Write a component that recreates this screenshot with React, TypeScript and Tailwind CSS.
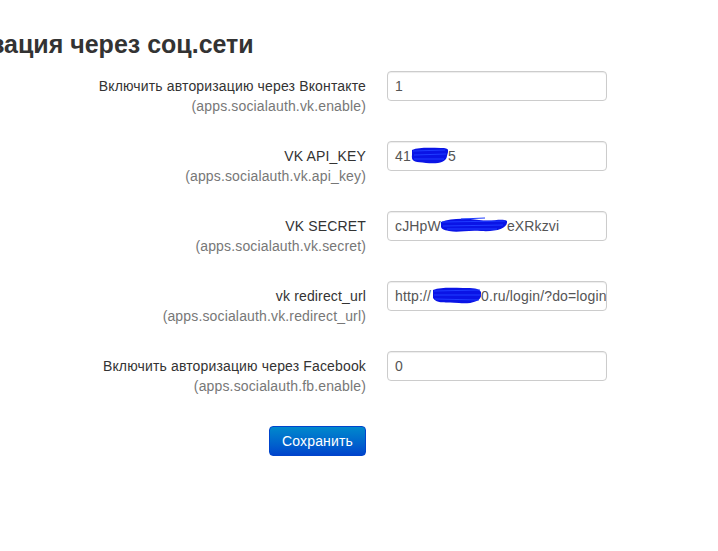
import React from 'react'

const font = { fontFamily: '"Liberation Sans", Arial, sans-serif' }

function Blob({ w, variant }: { w: number; variant: number }) {
  // blue pen scribble used to hide part of the value
  const paths = [
    'M1 3 C8 0, 20 1, 30 1 S37 4, 36 9 C35 16, 26 17, 15 16 S0 15, 1 8 Z',
    'M0 5 C10 1, 24 1, 38 3 S60 1, 66 4 C67 11, 56 15, 40 14 S18 16, 8 14 S0 10, 0 5 Z',
    'M2 3 C10 0, 22 1, 32 1 S48 1, 50 5 C52 14, 42 17, 28 16 S6 17, 2 11 Z',
  ]
  const lines = [
    'M2 4 L34 3 M3 8 L35 7 M3 12 L33 12',
    'M1 5 L64 4 M2 9 L62 8 M6 12 L56 12 M20 2 L44 1',
    'M3 4 L49 3 M3 8 L50 8 M4 12 L48 13',
  ]
  return (
    <svg width={w} height={17} viewBox={`0 0 ${w} 17`} className="shrink-0 -mt-[2px]">
      <path d={paths[variant]} fill="#0a14e6" />
      <path d={lines[variant]} stroke="#1f3cff" strokeWidth="1.2" fill="none" />
    </svg>
  )
}

function Field({ children }: { children: React.ReactNode }) {
  return (
    <div className="ml-[21px] w-[220px] h-[30px] border border-[#cccccc] rounded-[4px] bg-white px-[7px] flex items-center overflow-hidden whitespace-nowrap text-[14px] text-[#555555] tracking-[0.15px] shadow-[inset_0_1px_1px_rgba(0,0,0,0.075)]">
      {children}
    </div>
  )
}

function Row({ label, hint, children }: { label: string; hint: string; children: React.ReactNode }) {
  return (
    <div className="flex items-start mb-[25px]">
      <div className="w-[366px] text-right pt-[5px] text-[14px] leading-[20px] tracking-[0.15px]">
        <div className="text-[#333333]">{label}</div>
        <div className="text-[#777777]">{hint}</div>
      </div>
      <Field>{children}</Field>
    </div>
  )
}

export default function App() {
  return (
    <div className="w-[718px] h-[551px] bg-white overflow-hidden" style={font}>
      <h3 className="text-[25px] font-bold leading-[26px] text-[#333333] pt-[31px] -ml-[99px] whitespace-nowrap">
        Авторизация через соц.сети
      </h3>
      <div className="mt-[14px]">
        <Row label="Включить авторизацию через Вконтакте" hint="(apps.socialauth.vk.enable)">
          1
        </Row>
        <Row label="VK API_KEY" hint="(apps.socialauth.vk.api_key)">
          41<Blob w={37} variant={0} />5
        </Row>
        <Row label="VK SECRET" hint="(apps.socialauth.vk.secret)">
          cJHpW<Blob w={66} variant={1} />eXRkzvi
        </Row>
        <Row label="vk redirect_url" hint="(apps.socialauth.vk.redirect_url)">
          http://<Blob w={50} variant={2} />0.ru/login/?do=login_vk
        </Row>
        <Row label="Включить авторизацию через Facebook" hint="(apps.socialauth.fb.enable)">
          0
        </Row>
        <div className="w-[366px] flex justify-end mt-[30px]">
          <button className="h-[30px] w-[97px] rounded-[4px] text-white text-[14px] tracking-[0.15px] border border-[#0044cc] bg-gradient-to-b from-[#0088cc] to-[#0044cc]">
            Сохранить
          </button>
        </div>
      </div>
    </div>
  )
}
